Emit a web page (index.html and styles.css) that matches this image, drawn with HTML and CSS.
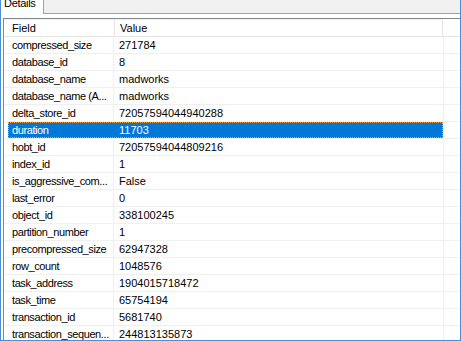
FILE: index.html
```html
<!DOCTYPE html>
<html>
<head>
  <title>Details</title>
  <link rel="stylesheet" href="styles.css">
</head>
<body>
  <div class="window">
    <div class="tabs">
      <div class="tab">Details</div>
      <div class="tabs-rest"></div>
    </div>

    <div class="panel">
      <div class="list">
        <div class="list-header">
          <div class="head-cell head-field">Field</div>
          <div class="head-cell head-value">Value</div>
          <div class="head-rest"></div>
        </div>

        <div class="row"><div class="indent"></div><div class="item"><div class="field">compressed_size</div><div class="value">271784</div></div><div class="row-rest"></div></div>
        <div class="row"><div class="indent"></div><div class="item"><div class="field">database_id</div><div class="value">8</div></div><div class="row-rest"></div></div>
        <div class="row"><div class="indent"></div><div class="item"><div class="field">database_name</div><div class="value">madworks</div></div><div class="row-rest"></div></div>
        <div class="row"><div class="indent"></div><div class="item"><div class="field">database_name (A...</div><div class="value">madworks</div></div><div class="row-rest"></div></div>
        <div class="row"><div class="indent"></div><div class="item"><div class="field">delta_store_id</div><div class="value">72057594044940288</div></div><div class="row-rest"></div></div>
        <div class="row"><div class="indent"></div><div class="item selected"><div class="field">duration</div><div class="value">11703</div></div><div class="row-rest"></div></div>
        <div class="row"><div class="indent"></div><div class="item"><div class="field">hobt_id</div><div class="value">72057594044809216</div></div><div class="row-rest"></div></div>
        <div class="row"><div class="indent"></div><div class="item"><div class="field">index_id</div><div class="value">1</div></div><div class="row-rest"></div></div>
        <div class="row"><div class="indent"></div><div class="item"><div class="field">is_aggressive_com...</div><div class="value">False</div></div><div class="row-rest"></div></div>
        <div class="row"><div class="indent"></div><div class="item"><div class="field">last_error</div><div class="value">0</div></div><div class="row-rest"></div></div>
        <div class="row"><div class="indent"></div><div class="item"><div class="field">object_id</div><div class="value">338100245</div></div><div class="row-rest"></div></div>
        <div class="row"><div class="indent"></div><div class="item"><div class="field">partition_number</div><div class="value">1</div></div><div class="row-rest"></div></div>
        <div class="row"><div class="indent"></div><div class="item"><div class="field">precompressed_size</div><div class="value">62947328</div></div><div class="row-rest"></div></div>
        <div class="row"><div class="indent"></div><div class="item"><div class="field">row_count</div><div class="value">1048576</div></div><div class="row-rest"></div></div>
        <div class="row"><div class="indent"></div><div class="item"><div class="field">task_address</div><div class="value">1904015718472</div></div><div class="row-rest"></div></div>
        <div class="row"><div class="indent"></div><div class="item"><div class="field">task_time</div><div class="value">65754194</div></div><div class="row-rest"></div></div>
        <div class="row"><div class="indent"></div><div class="item"><div class="field">transaction_id</div><div class="value">5681740</div></div><div class="row-rest"></div></div>
        <div class="row"><div class="indent"></div><div class="item"><div class="field">transaction_sequen...</div><div class="value">244813135873</div></div><div class="row-rest"></div></div>
      </div>
    </div>
  </div>
</body>
</html>
```

FILE: styles.css
```css
html, body {
  margin: 0;
  padding: 0;
  background-color: #fff;
}

body {
  font-family: "Liberation Sans", Arial, sans-serif;
  font-size: 11px;
  color: #000;
}

.window {
  width: 461px;
  height: 341px;
  box-sizing: border-box;
  border-left: 1px solid #4a8fd6;
  border-right: 1px solid #4a8fd6;
  border-bottom: 1px solid #4a8fd6;
  overflow: hidden;
  background-color: #fff;
}

/* tab strip, scrolled so only the lower part shows */
.tabs {
  display: flex;
  height: 14px;
  overflow: hidden;
}

.tab {
  width: 39px;
  padding-left: 3px;
  background-color: #fff;
  border-right: 1px solid #a0a0a0;
  line-height: 13px;
  margin-top: -3px;
  height: 17px;
  letter-spacing: -0.3px;
}

.tabs-rest {
  flex: 1;
  height: 13px;
  background-color: #f0f0f0;
  border-bottom: 1px solid #a0a0a0;
}

.panel {
  padding-top: 4px;
  padding-left: 2px;
}

.list {
  border-top: 1px solid #828790;
  border-left: 1px solid #828790;
}

.list-header {
  display: flex;
  height: 17px;
  line-height: 16px;
  border-bottom: 1px solid #e5e5e5;
}

.head-cell {
  box-sizing: border-box;
  border-right: 1px solid #e5e5e5;
  border-top: 1px solid #f0f0f0;
}

.head-field {
  width: 111px;
  padding-left: 8px;
}

.head-value {
  width: 328px;
  padding-left: 5px;
}

.head-rest {
  flex: 1;
}

.row {
  display: flex;
  height: 16px;
  line-height: 16px;
  border-bottom: 1px solid #f0f0f0;
}

.indent {
  width: 4px;
}

.item {
  display: flex;
  width: 435px;
  white-space: nowrap;
}

.field {
  box-sizing: border-box;
  width: 106px;
  padding-left: 4px;
  border-right: 1px solid #f0f0f0;
  overflow: hidden;
  letter-spacing: -0.4px;
}

.value {
  box-sizing: border-box;
  width: 329px;
  padding-left: 5px;
  overflow: hidden;
}

.row-rest {
  flex: 1;
  border-left: 1px solid #f0f0f0;
}

.item.selected {
  background-color: #0078d7;
  color: #fff;
  outline: 1px dotted #f0a040;
  outline-offset: -1px;
}

.item.selected .field {
  border-right-color: #0078d7;
}
```
